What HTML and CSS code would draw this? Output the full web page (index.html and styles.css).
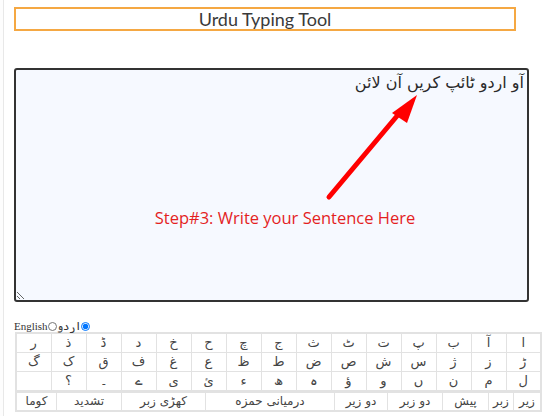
FILE: index.html
```html
<!DOCTYPE html>
<html lang="ur">
<head>
    <meta charset="UTF-8">
    <meta name="viewport" content="width=device-width, initial-scale=1.0">
    <title>Urdu Typing Tool</title>
    <link rel="stylesheet" href="styles.css">
</head>
<body>
    <div class="page">
        <h1 class="title">Urdu Typing Tool</h1>

        <div class="editor">
            <textarea id="urduText" class="urdu-input" dir="rtl">آو اردو ٹائپ کریں آن لائن</textarea>
            <svg class="hint-arrow" width="515" height="234" viewBox="0 0 515 234">
                <line x1="315" y1="129" x2="383" y2="48" stroke="#ff0000" stroke-width="5" stroke-linecap="round"/>
                <polygon points="403,27 378,45 393,55" fill="#ff0000"/>
            </svg>
            <p class="hint-text">Step#3: Write your Sentence Here</p>
        </div>

        <div class="lang-switch">
            <label>English<input type="radio" name="lang" value="en"></label><label>اردو<input type="radio" name="lang" value="ur" checked></label>
        </div>

        <table class="keyboard" dir="rtl">
            <tr>
                <td>ا</td><td>آ</td><td>ب</td><td>پ</td><td>ت</td><td>ٹ</td><td>ث</td><td>ج</td><td>چ</td><td>ح</td><td>خ</td><td>د</td><td>ڈ</td><td>ذ</td><td>ر</td>
            </tr>
            <tr>
                <td>ڑ</td><td>ز</td><td>ژ</td><td>س</td><td>ش</td><td>ص</td><td>ض</td><td>ط</td><td>ظ</td><td>ع</td><td>غ</td><td>ف</td><td>ق</td><td>ک</td><td>گ</td>
            </tr>
            <tr>
                <td>ل</td><td>م</td><td>ن</td><td>ں</td><td>و</td><td>ؤ</td><td>ہ</td><td>ھ</td><td>ء</td><td>ئ</td><td>ی</td><td>ے</td><td>۔</td><td>؟</td><td></td>
            </tr>
        </table>
        <div class="keyboard-extra" dir="rtl">
            <span>زیر</span><span>زبر</span><span>پیش</span><span>دو زبر</span><span>دو زیر</span><span>درمیانی حمزه</span><span>کھڑی زبر</span><span>تشدید</span><span>کوما</span>
        </div>
    </div>
</body>
</html>
```

FILE: styles.css
```css
* {
    margin: 0;
    padding: 0;
    box-sizing: border-box;
}

body {
    background-color: #fdfdfd;
    color: #333;
    font-family: 'Lato', sans-serif;
    border-left: 1px solid #e8e8e8;
    margin-left: 3px;
    height: 416px;
    overflow: hidden;
}

.page {
    background-color: #fff;
    padding: 7px 0 0 10px;
    height: 100%;
}

/* Title bar */
.title {
    width: 502px;
    height: 24px;
    border: 2px solid #f5a843;
    font-size: 18px;
    font-weight: normal;
    line-height: 20px;
    text-align: center;
    color: #3a3a3a;
}

/* Text area with the hint overlay */
.editor {
    position: relative;
    width: 515px;
    height: 234px;
    margin-top: 37px;
}

.urdu-input {
    display: block;
    width: 100%;
    height: 100%;
    border: 2px solid #333;
    border-radius: 3px;
    background-color: #f6f9ff;
    padding: 2px 3px;
    font-family: 'DejaVu Sans', sans-serif;
    font-size: 16px;
    line-height: 22px;
    color: #2a2a2a;
    resize: both;
    outline: none;
}

.hint-arrow {
    position: absolute;
    left: 0;
    top: 0;
    pointer-events: none;
}

.hint-text {
    position: absolute;
    left: 0;
    width: 542px;
    top: 138px;
    text-align: center;
    font-family: 'Open Sans', sans-serif;
    font-size: 16.5px;
    color: #e41f1f;
    pointer-events: none;
}

/* Language switch */
.lang-switch {
    margin-top: 18px;
    height: 12px;
    font-family: 'Liberation Serif', serif;
    font-size: 11px;
    line-height: 12px;
    color: #333;
}

.lang-switch label {
    display: inline-flex;
    align-items: center;
}

.lang-switch input {
    width: 9px;
    height: 9px;
    margin: 0;
}

/* On-screen keyboard */
.keyboard {
    width: 527px;
    margin-left: 1px;
    border-collapse: collapse;
    border: 2px solid #e2e2e2;
    border-bottom: none;
    table-layout: fixed;
    font-family: 'DejaVu Sans', sans-serif;
    font-size: 13px;
    color: #444;
}

.keyboard td {
    height: 19px;
    border: 1px solid #e2e2e2;
    text-align: center;
    line-height: 17px;
    padding: 0;
}

.keyboard-extra {
    display: flex;
    width: 527px;
    height: 21px;
    margin-left: 1px;
    border: 2px solid #e2e2e2;
    font-family: 'DejaVu Sans', sans-serif;
    font-size: 12px;
    color: #444;
}

.keyboard-extra span {
    border-left: 1px solid #e2e2e2;
    text-align: center;
    line-height: 17px;
}

.keyboard-extra span:last-child {
    border-left: none;
}

.keyboard-extra span:nth-child(1) { width: 27px; }
.keyboard-extra span:nth-child(2) { width: 25px; }
.keyboard-extra span:nth-child(3) { width: 46px; }
.keyboard-extra span:nth-child(4) { width: 55px; }
.keyboard-extra span:nth-child(5) { width: 53px; }
.keyboard-extra span:nth-child(6) { width: 129px; }
.keyboard-extra span:nth-child(7) { width: 84px; }
.keyboard-extra span:nth-child(8) { width: 65px; }
.keyboard-extra span:nth-child(9) { flex: 1; }
```
